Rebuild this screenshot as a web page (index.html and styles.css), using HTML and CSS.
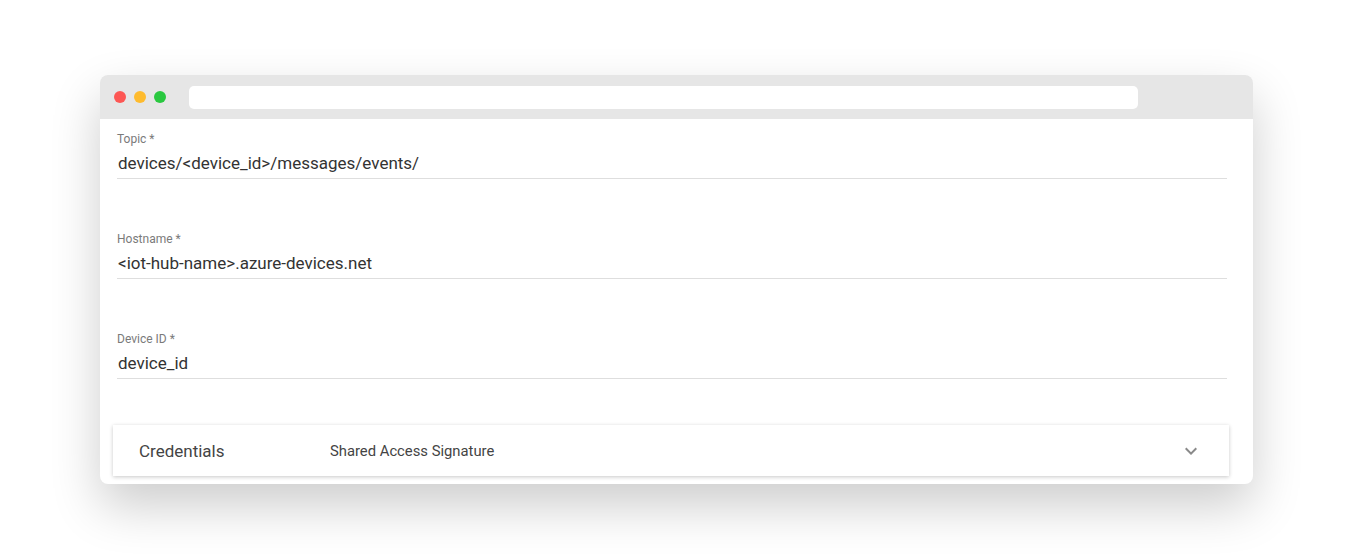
FILE: index.html
```html
<!DOCTYPE html>
<html lang="en">
<head>
  <meta charset="UTF-8" />
  <title>Azure IoT Hub</title>
  <link rel="stylesheet" href="styles.css">
</head>
<body>
  <div class="window">
    <div class="titlebar">
      <div class="dots">
        <span class="dot red"></span>
        <span class="dot yellow"></span>
        <span class="dot green"></span>
      </div>
      <div class="address"></div>
    </div>

    <div class="content">
      <div class="field">
        <label>Topic *</label>
        <div class="value">devices/&lt;device_id&gt;/messages/events/</div>
      </div>
      <div class="field">
        <label>Hostname *</label>
        <div class="value">&lt;iot-hub-name&gt;.azure-devices.net</div>
      </div>
      <div class="field">
        <label>Device ID *</label>
        <div class="value">device_id</div>
      </div>

      <div class="panel">
        <span class="panel-title">Credentials</span>
        <span class="panel-desc">Shared Access Signature</span>
        <svg class="chevron" width="24" height="24" viewBox="0 0 24 24">
          <path d="M7.41 8.59L12 13.17l4.59-4.58L18 10l-6 6-6-6z" fill="#8a8a8a"/>
        </svg>
      </div>
    </div>
  </div>
</body>
</html>
```

FILE: styles.css
```css
html, body {
  height: 100%;
}

body {
  margin: 0;
  background: #fff;
  font-family: Roboto, 'Liberation Sans', sans-serif;
  padding-top: 75px;
  box-sizing: border-box;
}

.window {
  margin: 0 100px;
  background: #fff;
  border-radius: 8px;
  overflow: hidden;
  box-shadow: 0 22px 50px rgba(0, 0, 0, 0.2);
}

.titlebar {
  height: 44px;
  background: #e6e6e6;
  display: flex;
  align-items: center;
  padding: 0 115px 0 14px;
}

.dots {
  display: flex;
  gap: 8px;
}

.dot {
  width: 12px;
  height: 12px;
  border-radius: 50%;
}

.red { background: #fd5754; }
.yellow { background: #febb2e; }
.green { background: #2ac840; }

.address {
  flex: 1;
  height: 23px;
  margin-left: 23px;
  background: #fff;
  border-radius: 5px;
}

.content {
  padding: 13px 24px 8px 13px;
}

.field {
  padding: 0 2px 0 4px;
  margin-bottom: 53px;
}

.field label {
  display: block;
  font-size: 12px;
  line-height: 14px;
  color: #7a7a7a;
}

.value {
  margin-top: 7px;
  padding: 0 1px 5px;
  font-size: 17px;
  line-height: 20px;
  color: #333;
  border-bottom: 1px solid #dedede;
}

.field:nth-child(3) {
  margin-bottom: 46px;
}

.panel {
  display: flex;
  align-items: center;
  height: 51px;
  padding: 0 26px 0 26px;
  background: #fff;
  box-shadow: 0 1px 4px rgba(0, 0, 0, 0.22);
}

.panel-title {
  width: 191px;
  font-size: 17px;
  color: #444;
}

.panel-desc {
  flex: 1;
  font-size: 14.8px;
  color: #444;
}

.chevron {
  display: block;
}
```
